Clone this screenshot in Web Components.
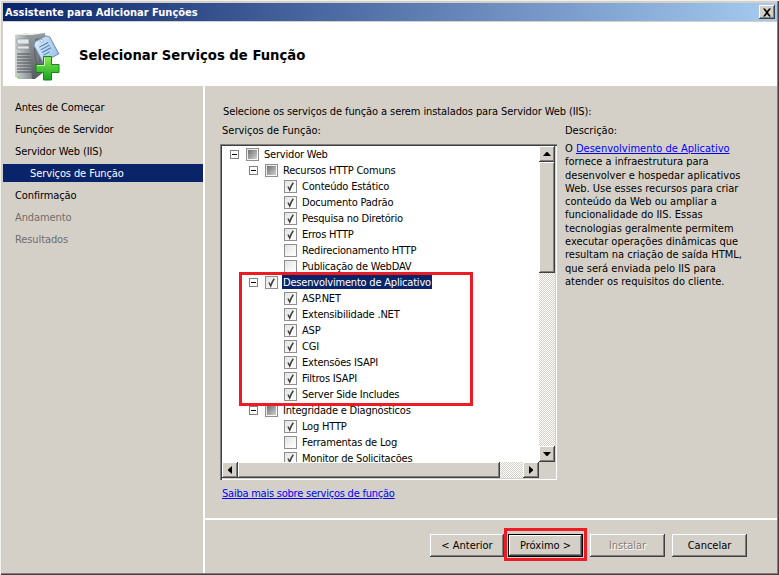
<!DOCTYPE html>
<html lang="pt">
<head>
<meta charset="utf-8">
<title>Assistente para Adicionar Funções</title>
<style>
  html, body { margin: 0; padding: 0; background: #d4d0c8; }
  body { width: 779px; height: 575px; overflow: hidden; font: 11px "DejaVu Sans Condensed", "DejaVu Sans", sans-serif; font-stretch: condensed; color: #000; }
</style>
</head>
<body>
<wizard-window>
  <title-bar slot="title">Assistente para Adicionar Funções</title-bar>
  <wizard-header slot="header">Selecionar Serviços de Função</wizard-header>
  <step-nav slot="nav">
    <step-item>Antes de Começar</step-item>
    <step-item>Funções de Servidor</step-item>
    <step-item>Servidor Web (IIS)</step-item>
    <step-item current>Serviços de Função</step-item>
    <step-item>Confirmação</step-item>
    <step-item disabled>Andamento</step-item>
    <step-item disabled>Resultados</step-item>
  </step-nav>
  <role-page slot="main"></role-page>
  <wizard-footer slot="footer"></wizard-footer>
</wizard-window>

<script>
const FACE = "#d4d0c8";
const RAISED = "inset -1px -1px 0 #404040, inset 1px 1px 0 #fff, inset -2px -2px 0 #808080";

class TitleBar extends HTMLElement {
  constructor() {
    super();
    this.attachShadow({ mode: "open" });
    this.shadowRoot.innerHTML = `
    <style>
      :host {
        display: flex; align-items: center; justify-content: space-between;
        height: 18px; padding: 0 2px;
        background: linear-gradient(90deg, #0a246a, #a6caf0);
        color: #fff; font-weight: bold; font-size: 11px;
      }
      .close {
        width: 16px; height: 14px; background: ${FACE};
        box-shadow: ${RAISED};
        display: flex; align-items: center; justify-content: center;
      }
    </style>
    <slot></slot>
    <div class="close">
      <svg width="10" height="9" viewBox="0 0 10 9"><path d="M1 .5h2l2 2.500 2-2.500h2L6 4.500l3 4H7L5 6 3 8.500H1l3-4z" fill="#000"/></svg>
    </div>`;
  }
}

class WizardHeader extends HTMLElement {
  constructor() {
    super();
    this.attachShadow({ mode: "open" });
    this.shadowRoot.innerHTML = `
    <style>
      :host {
        display: flex; align-items: center; gap: 19px;
        height: 64px; padding: 0 0 0 11px; margin-top: 1px;
        background: #fff; font-weight: bold; font-size: 14.700px;
      }
      svg { display: block; flex: none; margin-top: 6px; }
      span { margin-top: 1px; }
    </style>
    <svg width="46" height="50" viewBox="0 0 46 50">
      <defs>
        <linearGradient id="side" x1="0" x2="1"><stop offset="0" stop-color="#cfd3d6"/><stop offset="1" stop-color="#82888c"/></linearGradient>
        <linearGradient id="wall" x1="0" x2="0" y1="0" y2="1"><stop offset="0" stop-color="#979ca0"/><stop offset="1" stop-color="#565b5f"/></linearGradient>
        <linearGradient id="plus" x1="0" x2="0" y1="0" y2="1"><stop offset="0" stop-color="#8cec5a"/><stop offset="1" stop-color="#14a31c"/></linearGradient>
        <linearGradient id="tag" x1="0" x2="1" y1="0" y2="1"><stop offset="0" stop-color="#e0edf9"/><stop offset="1" stop-color="#9dc2e8"/></linearGradient>
      </defs>
      <path d="M1 3 15 1h16v38l-10 8-16 0-4-3z" fill="url(#wall)"/>
      <path d="M1 3 15 3l3 44H5L1 44z" fill="url(#side)"/>
      <path d="M1 3 15 1h16l-13 2z" fill="#eef0f1"/>
      <path d="M3 7h12v5H3zM3 14h12v3H3z" fill="#e4e6e8" stroke="#7e8387" stroke-width=".6"/>
      <path d="M3 22h13M3 25h13M3 28h14M3 31h14M3 34h14M3 37h14M3 40h15" stroke="#4c5054" stroke-width="1.200"/>
      <rect x="4" y="44" width="2" height="2" fill="#7ee04a"/>
      <path d="M22 7h4v22l-3 3c-3-7-3-18-1-25z" fill="#74797d" stroke="#54585c" stroke-width=".8"/>
      <g transform="rotate(-28 32 15)">
        <path d="M25 5h12l3 3v19H22V8z" fill="url(#tag)" stroke="#6c8db3"/>
        <path d="M26 12h10M26 15h10M26 18h10M26 21h7" stroke="#4a7cb3" stroke-width="1"/>
        <circle cx="31" cy="7.500" r="1.500" fill="#fff" stroke="#6c8db3" stroke-width=".6"/>
      </g>
      <path d="M29.500 24.500h8v8h7.500v8h-7.500v7.500h-8v-7.500h-7.500v-8h7.500z" fill="url(#plus)" stroke="#13861a"/>
      <path d="M30.500 26v7.500h-7.500" fill="none" stroke="#d2f8b6" stroke-width="1"/>
    </svg>
    <span><slot></slot></span>`;
  }
}

class StepItem extends HTMLElement {
  constructor() {
    super();
    this.attachShadow({ mode: "open" });
    this.shadowRoot.innerHTML = `
    <style>
      :host { display: flex; align-items: center; height: 22px; letter-spacing: -.1px; }
      div { flex: 1; height: 18px; line-height: 20px; padding-left: 12px; }
      :host([current]) div { padding-left: 27px; background: #0a246a; color: #fff; }
      :host([disabled]) div { color: #6f6e6a; }
    </style>
    <div><slot></slot></div>`;
  }
}

class StepNav extends HTMLElement {
  constructor() {
    super();
    this.attachShadow({ mode: "open" });
    this.shadowRoot.innerHTML = `
    <style>
      :host { display: block; padding-top: 10px; box-sizing: border-box; }
    </style>
    <slot></slot>`;
  }
}

class TreeRow extends HTMLElement {
  constructor() {
    super();
    this.attachShadow({ mode: "open" });
  }
  connectedCallback() {
    const level = Number(this.getAttribute("level"));
    const state = this.getAttribute("state");
    const hasToggle = level < 2;
    const check = state === "on"
      ? `<svg width="11" height="11" viewBox="0 0 11 11"><path d="M3 5.500 4.700 9C5.500 6.500 6.800 3.800 8.300 1.800" fill="none" stroke="#404040" stroke-width="1.500"/></svg>`
      : state === "mixed" ? `<i></i>` : "";
    this.shadowRoot.innerHTML = `
    <style>
      :host { display: flex; align-items: center; height: 16px; white-space: nowrap; padding-left: ${level * 19 + 8}px; letter-spacing: -.2px; }
      .toggle {
        width: 9px; height: 9px; box-sizing: border-box; border: 1px solid #808080; background: #fff;
        display: flex; align-items: center; justify-content: center; margin-right: 7px; flex: none;
      }
      .toggle::before { content: ""; width: 5px; height: 1px; background: #000; }
      .spacer { width: 16px; flex: none; }
      .box {
        width: 13px; height: 13px; box-sizing: border-box; border: 1px solid #8f8f8f; flex: none;
        background: linear-gradient(135deg, #e2e2e2, #f6f6f6 60%, #fff);
        display: flex; align-items: center; justify-content: center; margin-right: 4px;
      }
      .box i { width: 9px; height: 9px; background: linear-gradient(135deg, #707070, #d0d0d0); display: block; }
      .label { padding: 0 1px; height: 14px; line-height: 16px; }
      :host([selected]) .label { background: #0a246a; color: #fff; }
    </style>
    ${hasToggle ? `<span class="toggle"></span>` : `<span class="spacer"></span>`}
    <span class="box">${check}</span>
    <span class="label"><slot></slot></span>`;
  }
}

class ScrollButton extends HTMLElement {
  constructor() {
    super();
    this.attachShadow({ mode: "open" });
  }
  connectedCallback() {
    const paths = {
      up: "M3.500 0h1L8 4H0z",
      down: "M0 0h8L4.500 4h-1z",
      left: "M4 0v8L0 4.500v-1z",
      right: "M0 0v8l4-3.500v-1z"
    };
    const dir = this.getAttribute("dir-name");
    const wide = dir === "up" || dir === "down";
    this.shadowRoot.innerHTML = `
    <style>
      :host {
        display: flex; align-items: center; justify-content: center; flex: none;
        width: 16px; height: 16px; background: ${FACE}; box-shadow: ${RAISED};
      }
    </style>
    <svg width="${wide ? 8 : 4}" height="${wide ? 4 : 8}" viewBox="0 0 ${wide ? "8 4" : "4 8"}"><path d="${paths[dir]}" fill="#000"/></svg>`;
  }
}

class ScrollBar extends HTMLElement {
  constructor() {
    super();
    this.attachShadow({ mode: "open" });
  }
  connectedCallback() {
    const vertical = this.getAttribute("axis") === "y";
    this.shadowRoot.innerHTML = `
    <style>
      :host {
        display: flex; flex-direction: ${vertical ? "column" : "row"};
        ${vertical ? "width: 16px;" : "height: 16px;"}
        background: repeating-conic-gradient(#fff 0 25%, ${FACE} 0 50%) 0 0 / 2px 2px;
      }
      .thumb { flex: none; ${vertical ? "height: 111px;" : "width: 262px;"} background: ${FACE}; box-shadow: ${RAISED}; }
      .rest { flex: 1; }
    </style>
    <scroll-button dir-name="${vertical ? "up" : "left"}"></scroll-button>
    <div class="thumb"></div>
    <div class="rest"></div>
    <scroll-button dir-name="${vertical ? "down" : "right"}"></scroll-button>`;
  }
}

const TREE = [
  [0, "mixed", "Servidor Web"],
  [1, "mixed", "Recursos HTTP Comuns"],
  [2, "on", "Conteúdo Estático"],
  [2, "on", "Documento Padrão"],
  [2, "on", "Pesquisa no Diretório"],
  [2, "on", "Erros HTTP"],
  [2, "off", "Redirecionamento HTTP"],
  [2, "off", "Publicação de WebDAV"],
  [1, "on", "Desenvolvimento de Aplicativo", true],
  [2, "on", "ASP.NET"],
  [2, "on", "Extensibilidade .NET"],
  [2, "on", "ASP"],
  [2, "on", "CGI"],
  [2, "on", "Extensões ISAPI"],
  [2, "on", "Filtros ISAPI"],
  [2, "on", "Server Side Includes"],
  [1, "mixed", "Integridade e Diagnósticos"],
  [2, "on", "Log HTTP"],
  [2, "off", "Ferramentas de Log"],
  [2, "on", "Monitor de Solicitações"]
];

class TreeView extends HTMLElement {
  constructor() {
    super();
    this.attachShadow({ mode: "open" });
  }
  connectedCallback() {
    const rows = TREE.map(([level, state, text, selected]) =>
      `<tree-row level="${level}" state="${state}" ${selected ? "selected" : ""}>${text}</tree-row>`).join("");
    this.shadowRoot.innerHTML = `
    <style>
      :host {
        display: grid; grid-template-columns: 317px 16px; grid-template-rows: 316px 16px;
        width: 337px; height: 336px; box-sizing: border-box; padding: 2px; background: #fff;
        box-shadow: inset 1px 1px 0 #808080, inset 2px 2px 0 #404040, inset -1px -1px 0 #fff, inset -2px -2px 0 ${FACE};
      }
      .rows { overflow: hidden; }
      .corner { background: ${FACE}; }
    </style>
    <div class="rows">${rows}</div>
    <scroll-bar axis="y"></scroll-bar>
    <scroll-bar axis="x"></scroll-bar>
    <div class="corner"></div>`;
  }
}

class RedMark extends HTMLElement {
  constructor() {
    super();
    this.attachShadow({ mode: "open" });
    this.shadowRoot.innerHTML = `
    <style>
      :host { display: block; position: absolute; box-sizing: border-box; border: 3px solid #ed1c24; pointer-events: none; }
    </style>`;
  }
}

class RolePage extends HTMLElement {
  constructor() {
    super();
    this.attachShadow({ mode: "open" });
    this.shadowRoot.innerHTML = `
    <style>
      :host { display: block; position: relative; box-sizing: border-box; padding: 18px 0 0 15px; height: 100%; }
      p { margin: 0; }
      .lead { height: 14px; line-height: 16px; margin-left: 3px; letter-spacing: -.1px; }
      .cols { display: grid; grid-template-columns: 337px 200px; column-gap: 8px; margin-top: 5px; }
      .head { height: 14px; line-height: 16px; margin-bottom: 7px; }
      .cols > div:first-child .head { margin-left: 2px; }
      .desc { line-height: 13.300px; white-space: nowrap; margin-top: -2px; }
      a { color: #0000ff; text-decoration: underline; }
      .more { margin: 6px 0 0 2px; height: 14px; line-height: 16px; letter-spacing: -.23px; }
      red-mark { left: 34px; top: 186px; width: 234px; height: 134px; }
    </style>
    <p class="lead">Selecione os serviços de função a serem instalados para Servidor Web (IIS):</p>
    <div class="cols">
      <div>
        <div class="head">Serviços de Função:</div>
        <tree-view></tree-view>
      </div>
      <div>
        <div class="head">Descrição:</div>
        <p class="desc">O <a>Desenvolvimento de Aplicativo</a><br>fornece a infraestrutura para<br>desenvolver e hospedar aplicativos<br>Web. Use esses recursos para criar<br>conteúdo da Web ou ampliar a<br>funcionalidade do IIS. Essas<br>tecnologias geralmente permitem<br>executar operações dinâmicas que<br>resultam na criação de saída HTML,<br>que será enviada pelo IIS para<br>atender os requisitos do cliente.</p>
      </div>
    </div>
    <p class="more"><a>Saiba mais sobre serviços de função</a></p>
    <red-mark></red-mark>`;
  }
}

class WinButton extends HTMLElement {
  constructor() {
    super();
    this.attachShadow({ mode: "open" });
    this.shadowRoot.innerHTML = `
    <style>
      :host {
        display: flex; align-items: center; justify-content: center; box-sizing: border-box;
        width: 75px; height: 23px; background: ${FACE}; box-shadow: ${RAISED};
      }
      :host([default]) { border: 1px solid #000; }
      :host([disabled]) { color: #808080; text-shadow: 1px 1px 0 #fff; }
    </style>
    <slot></slot>`;
  }
}

class WizardFooter extends HTMLElement {
  constructor() {
    super();
    this.attachShadow({ mode: "open" });
    this.shadowRoot.innerHTML = `
    <style>
      :host {
        display: flex; justify-content: flex-end; gap: 7px; position: relative; box-sizing: border-box;
        height: 55px; padding: 14px 30px 0 0; border-top: 2px solid #fff;
      }
      win-button:first-of-type { width: 74px; margin-right: -3px; }
      red-mark { left: 299px; top: 8px; width: 83px; height: 33px; }
    </style>
    <win-button>&lt; Anterior</win-button>
    <win-button default>Próximo &gt;</win-button>
    <win-button disabled>Instalar</win-button>
    <win-button>Cancelar</win-button>
    <red-mark></red-mark>`;
  }
}

class WizardWindow extends HTMLElement {
  constructor() {
    super();
    this.attachShadow({ mode: "open" });
    this.shadowRoot.innerHTML = `
    <style>
      :host {
        display: grid; grid-template-columns: 200px 1fr; grid-template-rows: auto auto 1fr;
        width: 779px; height: 575px; box-sizing: border-box; padding: 3px 2px 2px 3px; background: ${FACE};
        box-shadow: inset 1px 1px 0 #f2f0ec, inset -1px -1px 0 #404040, inset -2px -2px 0 #808080;
      }
      .top { grid-column: 1 / -1; }
      .side { grid-column: 1; grid-row: 3; }
      .right { display: flex; flex-direction: column; border-left: 2px solid #fff; min-height: 0; }
      .main { flex: 1; min-height: 0; }
    </style>
    <div class="top"><slot name="title"></slot></div>
    <div class="top"><slot name="header"></slot></div>
    <div class="side"><slot name="nav"></slot></div>
    <div class="right">
      <div class="main"><slot name="main"></slot></div>
      <slot name="footer"></slot>
    </div>`;
  }
}

customElements.define("title-bar", TitleBar);
customElements.define("wizard-header", WizardHeader);
customElements.define("step-item", StepItem);
customElements.define("step-nav", StepNav);
customElements.define("tree-row", TreeRow);
customElements.define("scroll-button", ScrollButton);
customElements.define("scroll-bar", ScrollBar);
customElements.define("tree-view", TreeView);
customElements.define("red-mark", RedMark);
customElements.define("role-page", RolePage);
customElements.define("win-button", WinButton);
customElements.define("wizard-footer", WizardFooter);
customElements.define("wizard-window", WizardWindow);
</script>
</body>
</html>
